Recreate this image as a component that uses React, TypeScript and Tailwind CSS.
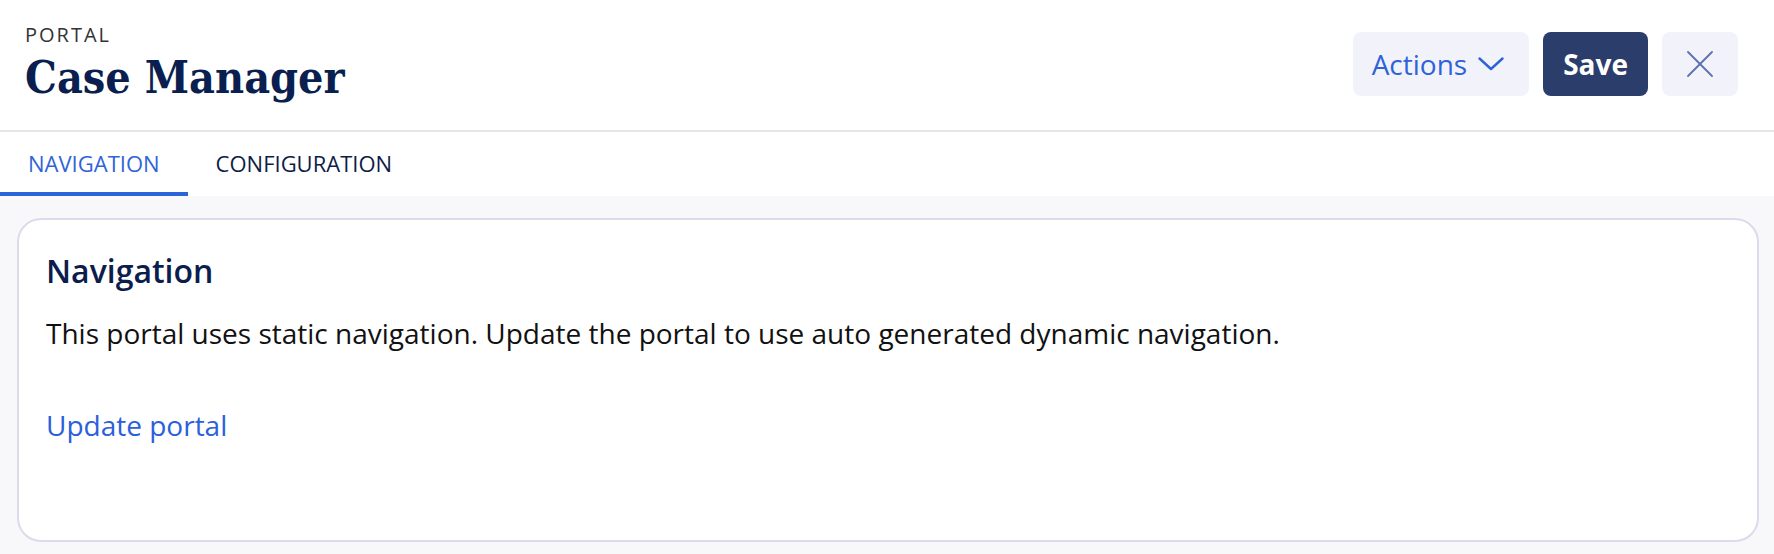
import { X } from 'lucide-react';

const tabs = [
  { id: 'navigation', label: 'NAVIGATION', active: true },
  { id: 'configuration', label: 'CONFIGURATION', active: false },
];

export default function App() {
  return (
    <div className="min-h-[554px] bg-[#f8f8fb] flex flex-col font-['Open_Sans',sans-serif]">
      {/* Header */}
      <header className="bg-white h-[132px] border-b-2 border-[#e6e6e9] flex justify-between items-start px-[25px]">
        <div className="pt-[23px] flex flex-col gap-[4px]">
          <span className="text-[20px] leading-[24px] tracking-[0.1em] uppercase text-[#333333]">Portal</span>
          <h1 className="font-['DejaVu_Serif_Condensed','DejaVu_Serif',serif] [font-stretch:condensed] font-bold text-[44.5px] leading-[52px] text-[#0a1f50]">
            Case Manager
          </h1>
        </div>
        <div className="flex items-center gap-[14px] mt-[32px] mr-[11px]">
          <button className="h-[64px] pl-[19px] pr-[25px] rounded-[8px] bg-[#f2f3fa] text-[#2e62d9] text-[28px] flex items-center gap-[11px]">
            Actions
            <svg width="26" height="14" viewBox="0 0 26 14" fill="none" stroke="currentColor" strokeWidth="2.4" strokeLinecap="round" strokeLinejoin="round">
              <polyline points="1.5,1.5 13,12 24.5,1.5" />
            </svg>
          </button>
          <button className="h-[64px] px-[20px] rounded-[8px] bg-[#2b3d6b] text-white text-[28px] font-bold">
            Save
          </button>
          <button className="h-[64px] w-[76px] rounded-[8px] bg-[#f2f3fa] text-[#5b6fb0] flex items-center justify-center">
            <X className="w-[48px] h-[48px]" strokeWidth={0.9} />
          </button>
        </div>
      </header>

      {/* Tabs */}
      <nav className="bg-white flex">
        {tabs.map((tab) => (
          <button
            key={tab.id}
            className={`px-[28px] pt-[15px] pb-[13px] text-[22px] leading-[32px] border-b-4 ${
              tab.active ? 'border-[#2b63d9] text-[#2f64d9]' : 'border-transparent text-[#0e1c48]'
            }`}
          >
            {tab.label}
          </button>
        ))}
      </nav>

      {/* Content */}
      <main className="pt-[22px] pl-[17px] pr-[15px] pb-[12px]">
        <section className="bg-white border-2 border-[#dddbeb] rounded-[24px] pt-[30px] pb-[95px] px-[27px]">
          <h2 className="text-[32px] leading-[41px] font-semibold text-[#0c1d4c]">Navigation</h2>
          <p className="mt-[22px] text-[28px] leading-[40px] text-[#111111]">
            This portal uses static navigation. Update the portal to use auto generated dynamic navigation.
          </p>
          <a href="#" className="block mt-[52px] text-[28px] leading-[40px] text-[#2a60da]">
            Update portal
          </a>
        </section>
      </main>
    </div>
  );
}
